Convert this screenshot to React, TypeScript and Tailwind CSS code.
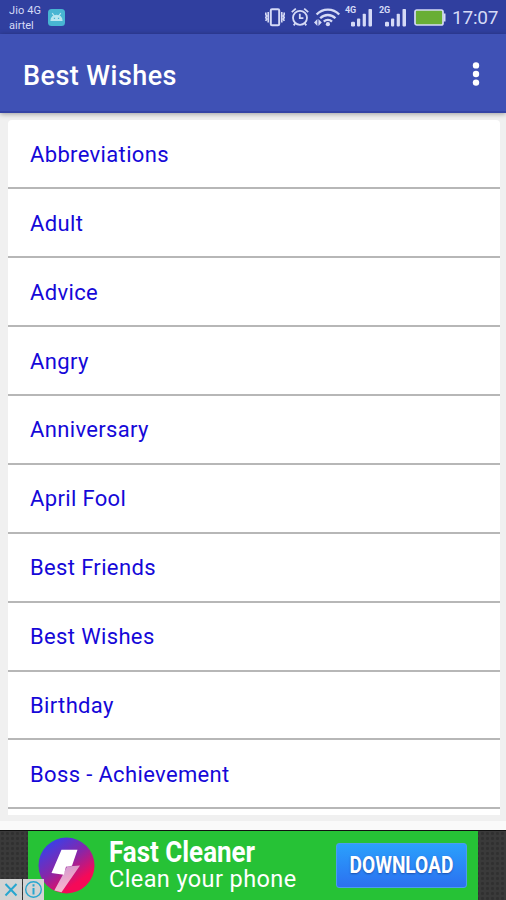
const categories = [
  "Abbreviations",
  "Adult",
  "Advice",
  "Angry",
  "Anniversary",
  "April Fool",
  "Best Friends",
  "Best Wishes",
  "Birthday",
  "Boss - Achievement",
]

function VibrateIcon() {
  return (
    <svg className="w-[20px] h-[20px]" viewBox="0 0 20 20" fill="none" stroke="#d5daf6" strokeWidth="1.6">
      <rect x="5.8" y="2.3" width="8.4" height="16" rx="1.2" strokeWidth="2" />
      <path d="M3.2 5v10.5M16.8 5v10.5M.8 5.5v2l.8 1.5-.8 1.5.8 1.5-.8 2M19.2 5.5v2l-.8 1.5.8 1.5-.8 1.5.8 2" />
    </svg>
  )
}

function AlarmIcon() {
  return (
    <svg className="w-[18px] h-[20px]" viewBox="0 0 18 20" fill="none" stroke="#d5daf6" strokeWidth="1.8">
      <circle cx="9" cy="10.8" r="7" />
      <path d="M8.8 6.8v4.4h3.6M.8 5.2l4-3.6M17.2 5.2l-4-3.6M4.5 16l-1.8 2.4M13.5 16l1.8 2.4" />
    </svg>
  )
}

function WifiIcon() {
  return (
    <svg className="w-[27px] h-[20px]" viewBox="0 0 27 20" fill="none" stroke="#d5daf6" strokeWidth="2.3">
      <path d="M2.6 7.5a15.4 15.4 0 0 1 22.6 0M6.2 11.2a10.6 10.6 0 0 1 15.2 0M9.8 14.6a5.8 5.8 0 0 1 8.2 0" />
      <circle cx="13.9" cy="17.2" r="2.1" fill="#d5daf6" stroke="none" />
      <path d="M0 15.5l3.4-3.4v6.8zM7.8 15.5l-3.4-3.4v6.8z" fill="#d5daf6" stroke="none" />
    </svg>
  )
}

function Signal({ label }: { label: string }) {
  return (
    <div className="relative w-[28px] h-[22px]">
      <span className="absolute left-0 top-0 text-[9px] leading-[8px] font-bold tracking-[-0.2px]">{label}</span>
      <svg className="absolute left-0 top-0 w-[28px] h-[22px]" viewBox="0 0 28 22" fill="#d5daf6">
        <rect x="6" y="15.8" width="4" height="4.6" rx="1.2" />
        <rect x="12" y="12.5" width="3.2" height="7.9" rx=".8" />
        <rect x="17.7" y="7.8" width="3.2" height="12.6" rx=".8" />
        <rect x="23.5" y="3" width="3.5" height="17.4" rx=".8" />
      </svg>
    </div>
  )
}

function StatusBar() {
  return (
    <div className="flex h-[34px] shrink-0 bg-[#303f9f] text-[#d5daf6]">
      <div className="w-12 pl-[9px] pt-[3px] text-[11px] leading-[15px]">
        <p className="whitespace-nowrap tracking-[0.1px]">Jio 4G</p>
        <p>airtel</p>
      </div>
      <svg className="mt-[9px] w-[17px] h-[17px]" viewBox="0 0 17 17">
        <rect width="17" height="17" rx="3.5" fill="#48b5d2" />
        <path d="M3 11.5a5.5 5.3 0 0 1 11 0zM4.2 4.2l2 2.6M12.8 4.2l-2 2.6" fill="#b9e6f0" stroke="#b9e6f0" strokeWidth="1.1" />
        <path d="M5.8 9.3h1.3M9.9 9.3h1.3" stroke="#48b5d2" strokeWidth="1.3" />
      </svg>
      <div className="ml-auto flex pr-[8px]">
        <div className="mt-[7px]"><VibrateIcon /></div>
        <div className="mt-[7px] ml-[6px]"><AlarmIcon /></div>
        <div className="mt-[7px] ml-[5px]"><WifiIcon /></div>
        <div className="mt-[6px] ml-[4px]"><Signal label="4G" /></div>
        <div className="mt-[6px] ml-[6px]"><Signal label="2G" /></div>
        <svg className="mt-[9px] ml-[7px] w-[32px] h-[17px]" viewBox="0 0 32 17">
          <rect x="1" y="1" width="28" height="15" rx="1.8" fill="#69ae35" stroke="#d5daf6" strokeWidth="1.7" />
          <path d="M30.5 4.5v8" stroke="#d5daf6" strokeWidth="2" />
        </svg>
        <span className="ml-[6px] w-[46px] pt-[7px] text-[19px] leading-[22px] tracking-[-0.2px] whitespace-nowrap">17:07</span>
      </div>
    </div>
  )
}

function AdBanner() {
  return (
    <div className="relative flex h-[70px] shrink-0 justify-center border-t border-[#111] bg-[#3a3a3a] bg-[radial-gradient(#303030_1.2px,transparent_1.9px)] bg-[size:5px_5px]">
      <div className="flex w-[450px] bg-[#26c236] text-white">
        <svg className="ml-[10px] mt-[6px] w-[57px] h-[57px]" viewBox="0 0 57 57">
          <defs>
            <linearGradient id="disc" x1=".2" y1=".08" x2=".8" y2=".92">
              <stop offset="0" stopColor="#3a40e8" />
              <stop offset=".45" stopColor="#8826a8" />
              <stop offset=".85" stopColor="#f50a58" />
            </linearGradient>
            <linearGradient id="tail" x1="0" y1="0" x2="0" y2="1">
              <stop offset="0" stopColor="#fff" stopOpacity=".55" />
              <stop offset="1" stopColor="#fff" stopOpacity=".7" />
            </linearGradient>
          </defs>
          <circle cx="28.5" cy="28.5" r="28" fill="url(#disc)" />
          <path d="M29 29.5l13-1L23.5 55.2l-7.2-1.8 9.5-17.4z" fill="url(#tail)" />
          <path d="M23.5 12.8h16l-5.5 16-6 1-2.2 8-12.3-1.7z" fill="#fff" />
        </svg>
        <div className="ml-[14px] w-[227px] pt-[7px] whitespace-nowrap">
          <p className="origin-left scale-x-[0.895] text-[29px] leading-[29px] font-bold">Fast Cleaner</p>
          <p className="text-[23.5px] leading-[25px] tracking-[0.4px]">Clean your phone</p>
        </div>
        <button
          type="button"
          className="mt-[12px] flex h-[45px] w-[131px] items-center justify-center rounded-[3px] border border-[#4c9cf0] bg-linear-to-b from-[#2ba0fc] to-[#2c70f0]"
        >
          <span className="scale-x-[0.83] pt-[2px] text-[23px] font-bold [text-shadow:0_1px_2px_#1d50ae]">DOWNLOAD</span>
        </button>
      </div>
      <div className="absolute bottom-0 left-0 flex h-[21px] w-[44px]">
        <svg className="w-[44px] h-[21px]" viewBox="0 0 44 21" fill="none" stroke="#28a6cf" strokeWidth="2">
          <path d="M0 0h22v21H0zM23 0h21v21H23z" fill="#d3d3d3" stroke="none" />
          <path d="M5.5 5l11 11.5M16.5 5l-11 11.5" />
          <circle cx="33.5" cy="10.5" r="7.8" strokeWidth="1.4" />
          <path d="M33.5 9v6.5M33.5 5.2v2.2" />
        </svg>
      </div>
    </div>
  )
}

export default function App() {
  return (
    <div className="flex h-[900px] w-[506px] flex-col overflow-hidden bg-[#fafafa] font-[Roboto,sans-serif]">
      <StatusBar />
      <header className="z-10 flex h-[79px] shrink-0 items-center justify-between border-b-2 border-[#3443a5] bg-[#3f51b5] pl-[23px] pr-[16px] pt-[5px] text-white shadow-[0_1px_5px_rgba(0,0,0,0.35)]">
        <h1 className="pt-[2px] text-[27px] font-medium tracking-[0.45px]">Best Wishes</h1>
        <svg className="-mt-[3px] h-[26px] w-[28px]" viewBox="0 0 28 26" fill="#fff">
          <circle cx="14" cy="4.4" r="3.2" />
          <circle cx="14" cy="13" r="3.2" />
          <circle cx="14" cy="21.6" r="3.2" />
        </svg>
      </header>

      <main className="h-[708px] shrink-0 bg-[#f0f0f0] pl-[8px] pr-[6px] pt-[7px]">
        <ul className="h-[695px] overflow-hidden rounded-t-[4px] bg-white">
          {categories.map((name) => (
            <li
              key={name}
              className="flex h-[68.94px] items-center border-b-2 border-[#b7b7b7] pl-[22px] pt-[1.5px] text-[22px] tracking-[0.35px] text-[#1508d8]"
            >
              {name}
            </li>
          ))}
        </ul>
      </main>

      <div className="h-[9px] shrink-0" />
      <AdBanner />
    </div>
  )
}
